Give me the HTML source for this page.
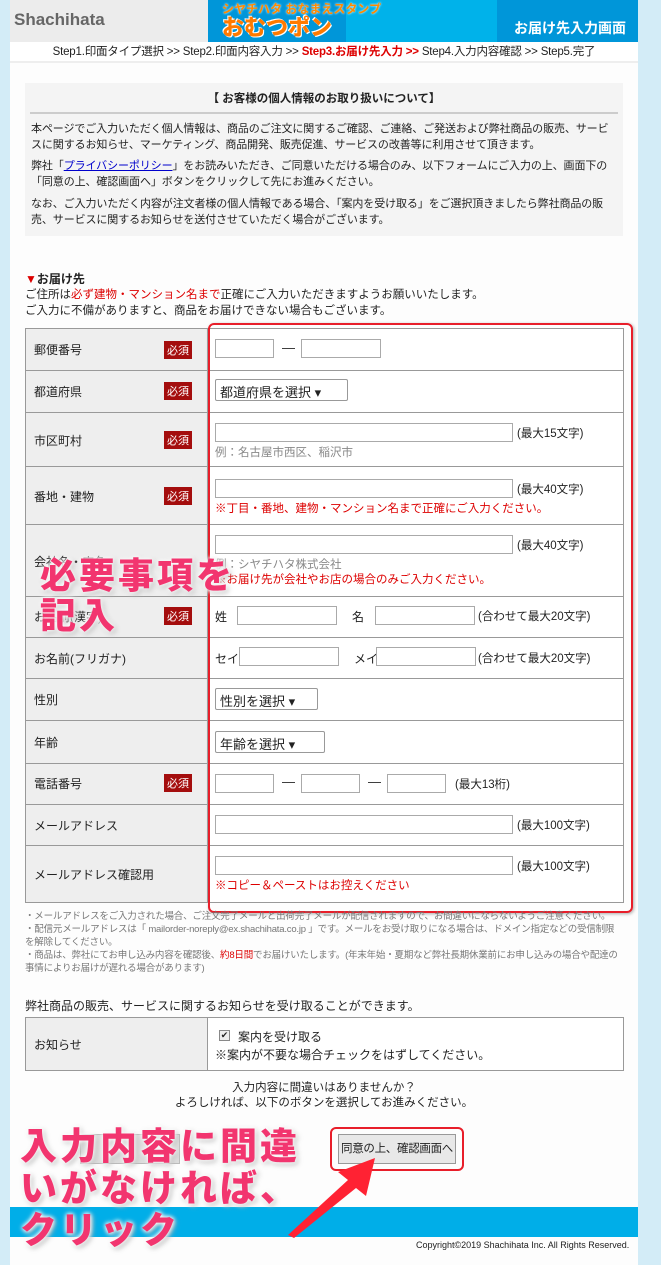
<!DOCTYPE html>
<html><head><meta charset="utf-8"><style>
*{box-sizing:border-box;margin:0;padding:0}
body{width:661px;height:1265px;background:#d3ecf7;font-family:"Liberation Sans","Noto Sans CJK JP",sans-serif;font-size:11.5px;color:#222;position:relative;overflow:hidden}
.a{position:absolute}
.main{left:10px;top:0;width:628px;height:1265px;background:#fdfdfd}
.inp{position:absolute;height:19px;border:1px solid #aaa;background:#fff}
.sel{position:absolute;height:22px;border:1px solid #999;background:#fff;font-size:13px;padding:2px 4px;border-radius:2px;white-space:nowrap}
.req{position:absolute;left:164px;background:#a40d0d;color:#fff;font-size:11px;padding:1px 3px}
.lab{position:absolute;left:34px;font-size:12px}
.r{color:#d00}
.g{color:#888}
.p{position:absolute;left:31px;width:584px;font-size:11px;line-height:16px;letter-spacing:-0.1px}
.big{font-family:"Noto Sans CJK JP",sans-serif;font-weight:900;color:#f2356f;text-shadow:0 0 4px #fff,0 0 6px #fff,2px 2px 6px #aaa;letter-spacing:3px}
</style></head><body>
<div class="a main"></div>
<div class="a" style="left:10px;top:0;width:198px;height:42px;background:#ececec"></div>
<div class="a" style="left:14px;top:10px;font-size:17px;font-weight:bold;color:#666">Shachihata</div>
<div class="a" style="left:208px;top:0;width:430px;height:42px;background:#00b2ea"></div>
<div class="a" style="left:208px;top:0;width:138px;height:42px;background:#0096d9"></div>
<div class="a" style="left:497px;top:0;width:141px;height:42px;background:#0096d9"></div>
<div class="a" style="left:222px;top:0;font-size:12px;font-weight:bold;color:#ff8a00;text-shadow:0 0 2px #fff">シヤチハタ おなまえスタンプ</div>
<div class="a" style="left:222px;top:12px;font-size:22px;font-weight:900;color:#ff7a00;font-family:'Noto Sans CJK JP',sans-serif;text-shadow:1px 1px 0 #fff,-1px -1px 0 #fff;line-height:28px">おむつポン</div>
<div class="a" style="left:514px;top:18px;font-size:14px;color:#fff;font-weight:bold">お届け先入力画面</div>
<div class="a" style="left:10px;top:42px;width:628px;height:21px;background:#fff;border-bottom:2px solid #eee;text-align:center;font-size:11.5px;line-height:20px;letter-spacing:-0.2px">Step1.印面タイプ選択 &gt;&gt; Step2.印面内容入力 &gt;&gt; <b class="r">Step3.お届け先入力 &gt;&gt;</b> Step4.入力内容確認 &gt;&gt; Step5.完了</div>
<div class="a" style="left:25px;top:83px;width:598px;height:153px;background:#f4f4f4"></div>
<div class="a" style="left:25px;top:90px;width:598px;text-align:center;font-weight:bold;font-size:11.5px">【 お客様の個人情報のお取り扱いについて】</div>
<div class="a" style="left:30px;top:112px;width:588px;height:2px;background:#ccc"></div>
<div class="p" style="top:121px">本ページでご入力いただく個人情報は、商品のご注文に関するご確認、ご連絡、ご発送および弊社商品の販売、サービスに関するお知らせ、マーケティング、商品開発、販売促進、サービスの改善等に利用させて頂きます。</div>
<div class="p" style="top:158px">弊社「<span style="color:#00c;text-decoration:underline">プライバシーポリシー</span>」をお読みいただき、ご同意いただける場合のみ、以下フォームにご入力の上、画面下の「同意の上、確認画面へ」ボタンをクリックして先にお進みください。</div>
<div class="p" style="top:196px">なお、ご入力いただく内容が注文者様の個人情報である場合、「案内を受け取る」をご選択頂きましたら弊社商品の販売、サービスに関するお知らせを送付させていただく場合がございます。</div>
<div class="a" style="left:25px;top:270px;font-weight:bold;font-size:12px"><span class="r">▼</span>お届け先</div>
<div class="a" style="left:25px;top:287px;font-size:11.5px;line-height:16px">ご住所は<span class="r">必ず建物・マンション名まで</span>正確にご入力いただきますようお願いいたします。<br>ご入力に不備がありますと、商品をお届けできない場合もございます。</div>
<div class="a" style="left:25px;top:328px;width:599px;height:575px;border:1px solid #999;background:#fff"></div>
<div class="a" style="left:26px;top:329px;width:182px;height:573px;background:#eeeeee;border-right:1px solid #999"></div>
<div class="a" style="left:25px;top:370px;width:599px;border-top:1px solid #999"></div>
<div class="a" style="left:25px;top:412px;width:599px;border-top:1px solid #999"></div>
<div class="a" style="left:25px;top:466px;width:599px;border-top:1px solid #999"></div>
<div class="a" style="left:25px;top:524px;width:599px;border-top:1px solid #999"></div>
<div class="a" style="left:25px;top:596px;width:599px;border-top:1px solid #999"></div>
<div class="a" style="left:25px;top:637px;width:599px;border-top:1px solid #999"></div>
<div class="a" style="left:25px;top:678px;width:599px;border-top:1px solid #999"></div>
<div class="a" style="left:25px;top:720px;width:599px;border-top:1px solid #999"></div>
<div class="a" style="left:25px;top:763px;width:599px;border-top:1px solid #999"></div>
<div class="a" style="left:25px;top:804px;width:599px;border-top:1px solid #999"></div>
<div class="a" style="left:25px;top:845px;width:599px;border-top:1px solid #999"></div>
<div class="lab" style="top:341px">郵便番号</div><div class="req" style="top:341px">必須</div>
<div class="lab" style="top:383px">都道府県</div><div class="req" style="top:382px">必須</div>
<div class="lab" style="top:432px">市区町村</div><div class="req" style="top:431px">必須</div>
<div class="lab" style="top:488px">番地・建物</div><div class="req" style="top:487px">必須</div>
<div class="lab" style="top:553px">会社名・店名</div>
<div class="lab" style="top:608px">お名前(漢字)</div><div class="req" style="top:607px">必須</div>
<div class="lab" style="top:650px">お名前(フリガナ)</div>
<div class="lab" style="top:691px">性別</div>
<div class="lab" style="top:734px">年齢</div>
<div class="lab" style="top:775px">電話番号</div><div class="req" style="top:774px">必須</div>
<div class="lab" style="top:817px">メールアドレス</div>
<div class="lab" style="top:866px">メールアドレス確認用</div>
<div class="inp" style="left:215px;top:339px;width:59px"></div>
<div class="a" style="left:282px;top:340px;font-size:13px">—</div>
<div class="inp" style="left:301px;top:339px;width:80px"></div>
<div class="sel" style="left:215px;top:379px;width:133px">都道府県を選択 ▾</div>
<div class="inp" style="left:215px;top:423px;width:298px"></div><div class="a" style="left:517px;top:425px">(最大15文字)</div>
<div class="a g" style="left:215px;top:444px">例：名古屋市西区、稲沢市</div>
<div class="inp" style="left:215px;top:479px;width:298px"></div><div class="a" style="left:517px;top:481px">(最大40文字)</div>
<div class="a r" style="left:215px;top:500px">※丁目・番地、建物・マンション名まで正確にご入力ください。</div>
<div class="inp" style="left:215px;top:535px;width:298px"></div><div class="a" style="left:517px;top:537px">(最大40文字)</div>
<div class="a g" style="left:215px;top:556px">例：シヤチハタ株式会社</div>
<div class="a r" style="left:215px;top:571px">※お届け先が会社やお店の場合のみご入力ください。</div>
<div class="a" style="left:215px;top:608px;font-size:12px">姓</div><div class="inp" style="left:237px;top:606px;width:100px"></div>
<div class="a" style="left:352px;top:608px;font-size:12px">名</div><div class="inp" style="left:375px;top:606px;width:100px"></div>
<div class="a" style="left:478px;top:608px">(合わせて最大20文字)</div>
<div class="a" style="left:215px;top:650px;font-size:12px">セイ</div><div class="inp" style="left:239px;top:647px;width:100px"></div>
<div class="a" style="left:354px;top:650px;font-size:12px">メイ</div><div class="inp" style="left:376px;top:647px;width:100px"></div>
<div class="a" style="left:478px;top:650px">(合わせて最大20文字)</div>
<div class="sel" style="left:215px;top:688px;width:103px">性別を選択 ▾</div>
<div class="sel" style="left:215px;top:731px;width:110px">年齢を選択 ▾</div>
<div class="inp" style="left:215px;top:774px;width:59px"></div>
<div class="a" style="left:282px;top:774px;font-size:13px">—</div>
<div class="inp" style="left:301px;top:774px;width:59px"></div>
<div class="a" style="left:368px;top:774px;font-size:13px">—</div>
<div class="inp" style="left:387px;top:774px;width:59px"></div>
<div class="a" style="left:455px;top:776px">(最大13桁)</div>
<div class="inp" style="left:215px;top:815px;width:298px"></div><div class="a" style="left:517px;top:817px">(最大100文字)</div>
<div class="inp" style="left:215px;top:856px;width:298px"></div><div class="a" style="left:517px;top:858px">(最大100文字)</div>
<div class="a r" style="left:215px;top:877px">※コピー＆ペーストはお控えください</div>
<div class="a" style="left:208px;top:323px;width:425px;height:590px;border:2px solid #e81e2a;border-radius:6px;box-shadow:1px 1px 3px #aaa"></div>
<div class="a" style="left:25px;top:910px;width:598px;font-size:9.5px;line-height:13px;color:#777;letter-spacing:-0.2px">・メールアドレスをご入力された場合、ご注文完了メールと出荷完了メールが配信されますので、お間違いにならないようご注意ください。<br>・配信元メールアドレスは「 mailorder-noreply@ex.shachihata.co.jp 」です。メールをお受け取りになる場合は、ドメイン指定などの受信制限を解除してください。<br>・商品は、弊社にてお申し込み内容を確認後、<span class="r">約8日間</span>でお届けいたします。(年末年始・夏期など弊社長期休業前にお申し込みの場合や配達の事情によりお届けが遅れる場合があります)</div>
<div class="a" style="left:25px;top:997px;font-size:12px">弊社商品の販売、サービスに関するお知らせを受け取ることができます。</div>
<div class="a" style="left:25px;top:1017px;width:599px;height:54px;border:1px solid #999;background:#fff"></div>
<div class="a" style="left:26px;top:1018px;width:182px;height:52px;background:#eee;border-right:1px solid #999"></div>
<div class="a" style="left:34px;top:1036px;font-size:12px">お知らせ</div>
<div class="a" style="left:219px;top:1030px;width:11px;height:11px;border:1px solid #888;background:#eee;font-size:9px;line-height:9px;text-align:center">✔</div>
<div class="a" style="left:238px;top:1028px;font-size:12px">案内を受け取る</div>
<div class="a" style="left:215px;top:1046px;font-size:12px">※案内が不要な場合チェックをはずしてください。</div>
<div class="a" style="left:10px;top:1081px;width:628px;text-align:center;font-size:11.5px;line-height:15px">入力内容に間違いはありませんか？<br>よろしければ、以下のボタンを選択してお進みください。</div>
<div class="a" style="left:330px;top:1127px;width:134px;height:44px;border:2px solid #e81e2a;border-radius:6px"></div>
<div class="a" style="left:338px;top:1134px;width:118px;height:30px;border:1px solid #999;background:#e8e8e8;font-size:11.5px;line-height:28px;text-align:center;white-space:nowrap;letter-spacing:-0.3px">同意の上、確認画面へ</div>
<div class="a" style="left:80px;top:1134px;width:100px;height:30px;background:#ddd;border:1px solid #bbb"></div>
<div class="a" style="left:10px;top:1207px;width:628px;height:30px;background:#00aee8"></div>
<div class="a" style="left:416px;top:1240px;font-size:9px">Copyright©2019 Shachihata Inc. All Rights Reserved.</div>
<svg class="a" style="left:280px;top:1150px" width="110" height="90"><polygon points="8,85 68,30 58,22 95,8 86,46 76,38 14,88" fill="#f23"/></svg>
<div class="a big" style="left:40px;top:553px;font-size:36px;line-height:40px">必要事項を<br>記入</div>
<div class="a big" style="left:20px;top:1122px;font-size:37px;line-height:42px">入力内容に間違<br>いがなければ、<br>クリック</div>
</body></html>
